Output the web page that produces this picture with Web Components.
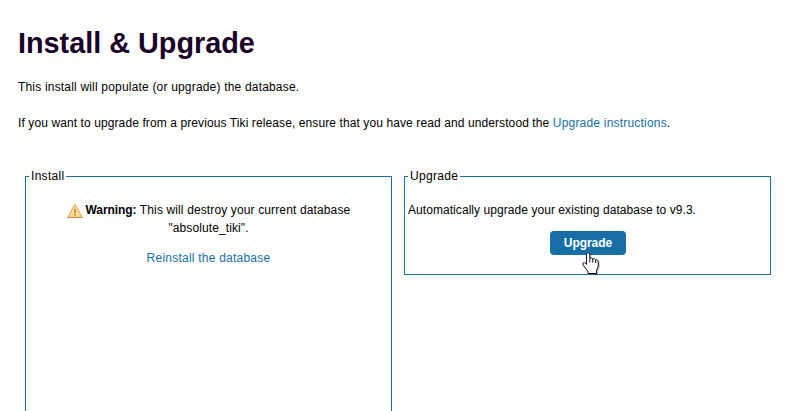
<!DOCTYPE html>
<html lang="en">
<head>
<meta charset="utf-8">
<title>Install &amp; Upgrade</title>
<style>
body { margin: 0; background: #fff; color: #000; font: 12px/18px "Liberation Sans", Arial, sans-serif; }
</style>
</head>
<body>
<install-page></install-page>
<script>
function define(name, html) {
  const template = document.createElement('template');
  template.innerHTML = html;
  customElements.define(name, class extends HTMLElement {
    constructor() {
      super();
      this.attachShadow({ mode: 'open' }).append(template.content.cloneNode(true));
    }
  });
}

define('text-run', `
<style>:host { display: inline; white-space: nowrap; }</style><slot></slot>`);

define('text-link', `
<style>
:host { display: inline; }
a { color: #176fa5; text-decoration: none; }
</style><a href="#"><slot></slot></a>`);

define('warning-icon', `
<style>:host { display: inline-block; width: 16px; height: 16px; vertical-align: -5px; } svg { display: block; }</style>
<svg width="16" height="16" viewBox="0 0 16 16">
  <path d="M8 1.3 15.2 14.4H.8Z" fill="#fff3cf" stroke="#e9a94f" stroke-width="1.1" stroke-linejoin="round"/>
  <path d="M8 4 13 13H3Z" fill="#fde3a4" stroke="#f6c66b" stroke-width=".6"/>
  <path d="M.8 14.4H15.2" stroke="#cf8440" stroke-width="1"/>
  <path d="M7.1 6h1.8v4.2H7.1zM7.1 11h1.8v1.6H7.1z" fill="#d08a35"/>
</svg>`);

define('hand-pointer', `
<style>:host { display: block; width: 18px; height: 23px; pointer-events: none; } svg { display: block; overflow: visible; filter: drop-shadow(1px 1px 0 rgba(40,40,40,.3)); }</style>
<svg width="18" height="23" viewBox="0 0 18 23">
  <path d="M4.5 1.6Q6 -.4 7.8 1.6V6.3Q9.5 5 10.7 6.9Q12.4 5.8 13.5 7.8Q15.4 7.2 16.2 9V14.5L14.5 18.5V21.5H6V19.5L1.2 13.2Q.2 10.3 2.6 10.6L4.5 12.3Z" fill="#fff" stroke="#15122a" stroke-width="1"/>
  <path d="M7.8 6.5V10.5M10.7 7V10.5M13.5 8V11" stroke="#15122a" stroke-width="1" fill="none"/>
</svg>`);

define('action-button', `
<style>
:host { display: inline-block; position: relative; }
button { display: block; width: 76px; height: 24px; padding: 0; border: 0; border-radius: 4px; background: #176fa5; color: #fff; font: bold 12px/24px "Liberation Sans", Arial, sans-serif; letter-spacing: -.05px; text-indent: 1px; }
::slotted(hand-pointer) { position: absolute; left: 32px; top: 21px; }
</style>
<button><slot></slot></button><slot name="pointer"></slot>`);

define('field-panel', `
<style>
:host { display: block; }
fieldset { box-sizing: border-box; height: 100%; min-width: 0; margin: 0; padding: 16px 3px 0; border: 1px solid #176fa5; border-bottom-width: var(--bottom-edge, 1px); }
legend { padding: 0 2px; height: 18px; text-align: left; letter-spacing: .3px; }
</style>
<fieldset><legend><slot name="title"></slot></legend><slot></slot></fieldset>`);

define('install-page', `
<style>
:host { display: block; padding: 24px 17px 0 18px; }
h1 { margin: 0; font-size: 28.8px; line-height: 38px; color: #1b0127; }
p { margin: 0; }
.intro { margin-top: 16px; letter-spacing: .185px; }
.note { margin-top: 18px; letter-spacing: .1px; }
.note text-link { letter-spacing: .2px; }
.panels { display: grid; grid-template-columns: 367px 367px; column-gap: 12px; align-items: start; margin: 35px 0 0 7px; }
.install { height: 244px; text-align: center; --bottom-edge: 0; }
.upgrade { height: 108px; }
.c { letter-spacing: .13px; }
.c b { letter-spacing: -.05px; }
.d { letter-spacing: .1px; }
.e { letter-spacing: .06px; }
.again { margin-top: 12px; letter-spacing: .23px; }
.go { display: flex; justify-content: center; margin-top: 12px; }
warning-icon { margin-right: -.6px; }
</style>
<h1><text-run class="h">Install &amp; Upgrade</text-run></h1>
<p class="intro"><text-run class="a">This install will populate (or upgrade) the database.</text-run></p>
<p class="note"><text-run class="b">If you want to upgrade from a previous Tiki release, ensure that you have read and understood the <text-link>Upgrade instructions</text-link>.</text-run></p>
<div class="panels">
  <field-panel class="install">
    <text-run slot="title">Install</text-run>
    <p><warning-icon></warning-icon> <text-run class="c"><b>Warning:</b> This will destroy your current database</text-run><br><text-run class="d">"absolute_tiki".</text-run></p>
    <p class="again"><text-link>Reinstall the database</text-link></p>
  </field-panel>
  <field-panel class="upgrade">
    <text-run slot="title">Upgrade</text-run>
    <p><text-run class="e">Automatically upgrade your existing database to v9.3.</text-run></p>
    <div class="go"><action-button>Upgrade<hand-pointer slot="pointer"></hand-pointer></action-button></div>
  </field-panel>
</div>`);
</script>
</body>
</html>
